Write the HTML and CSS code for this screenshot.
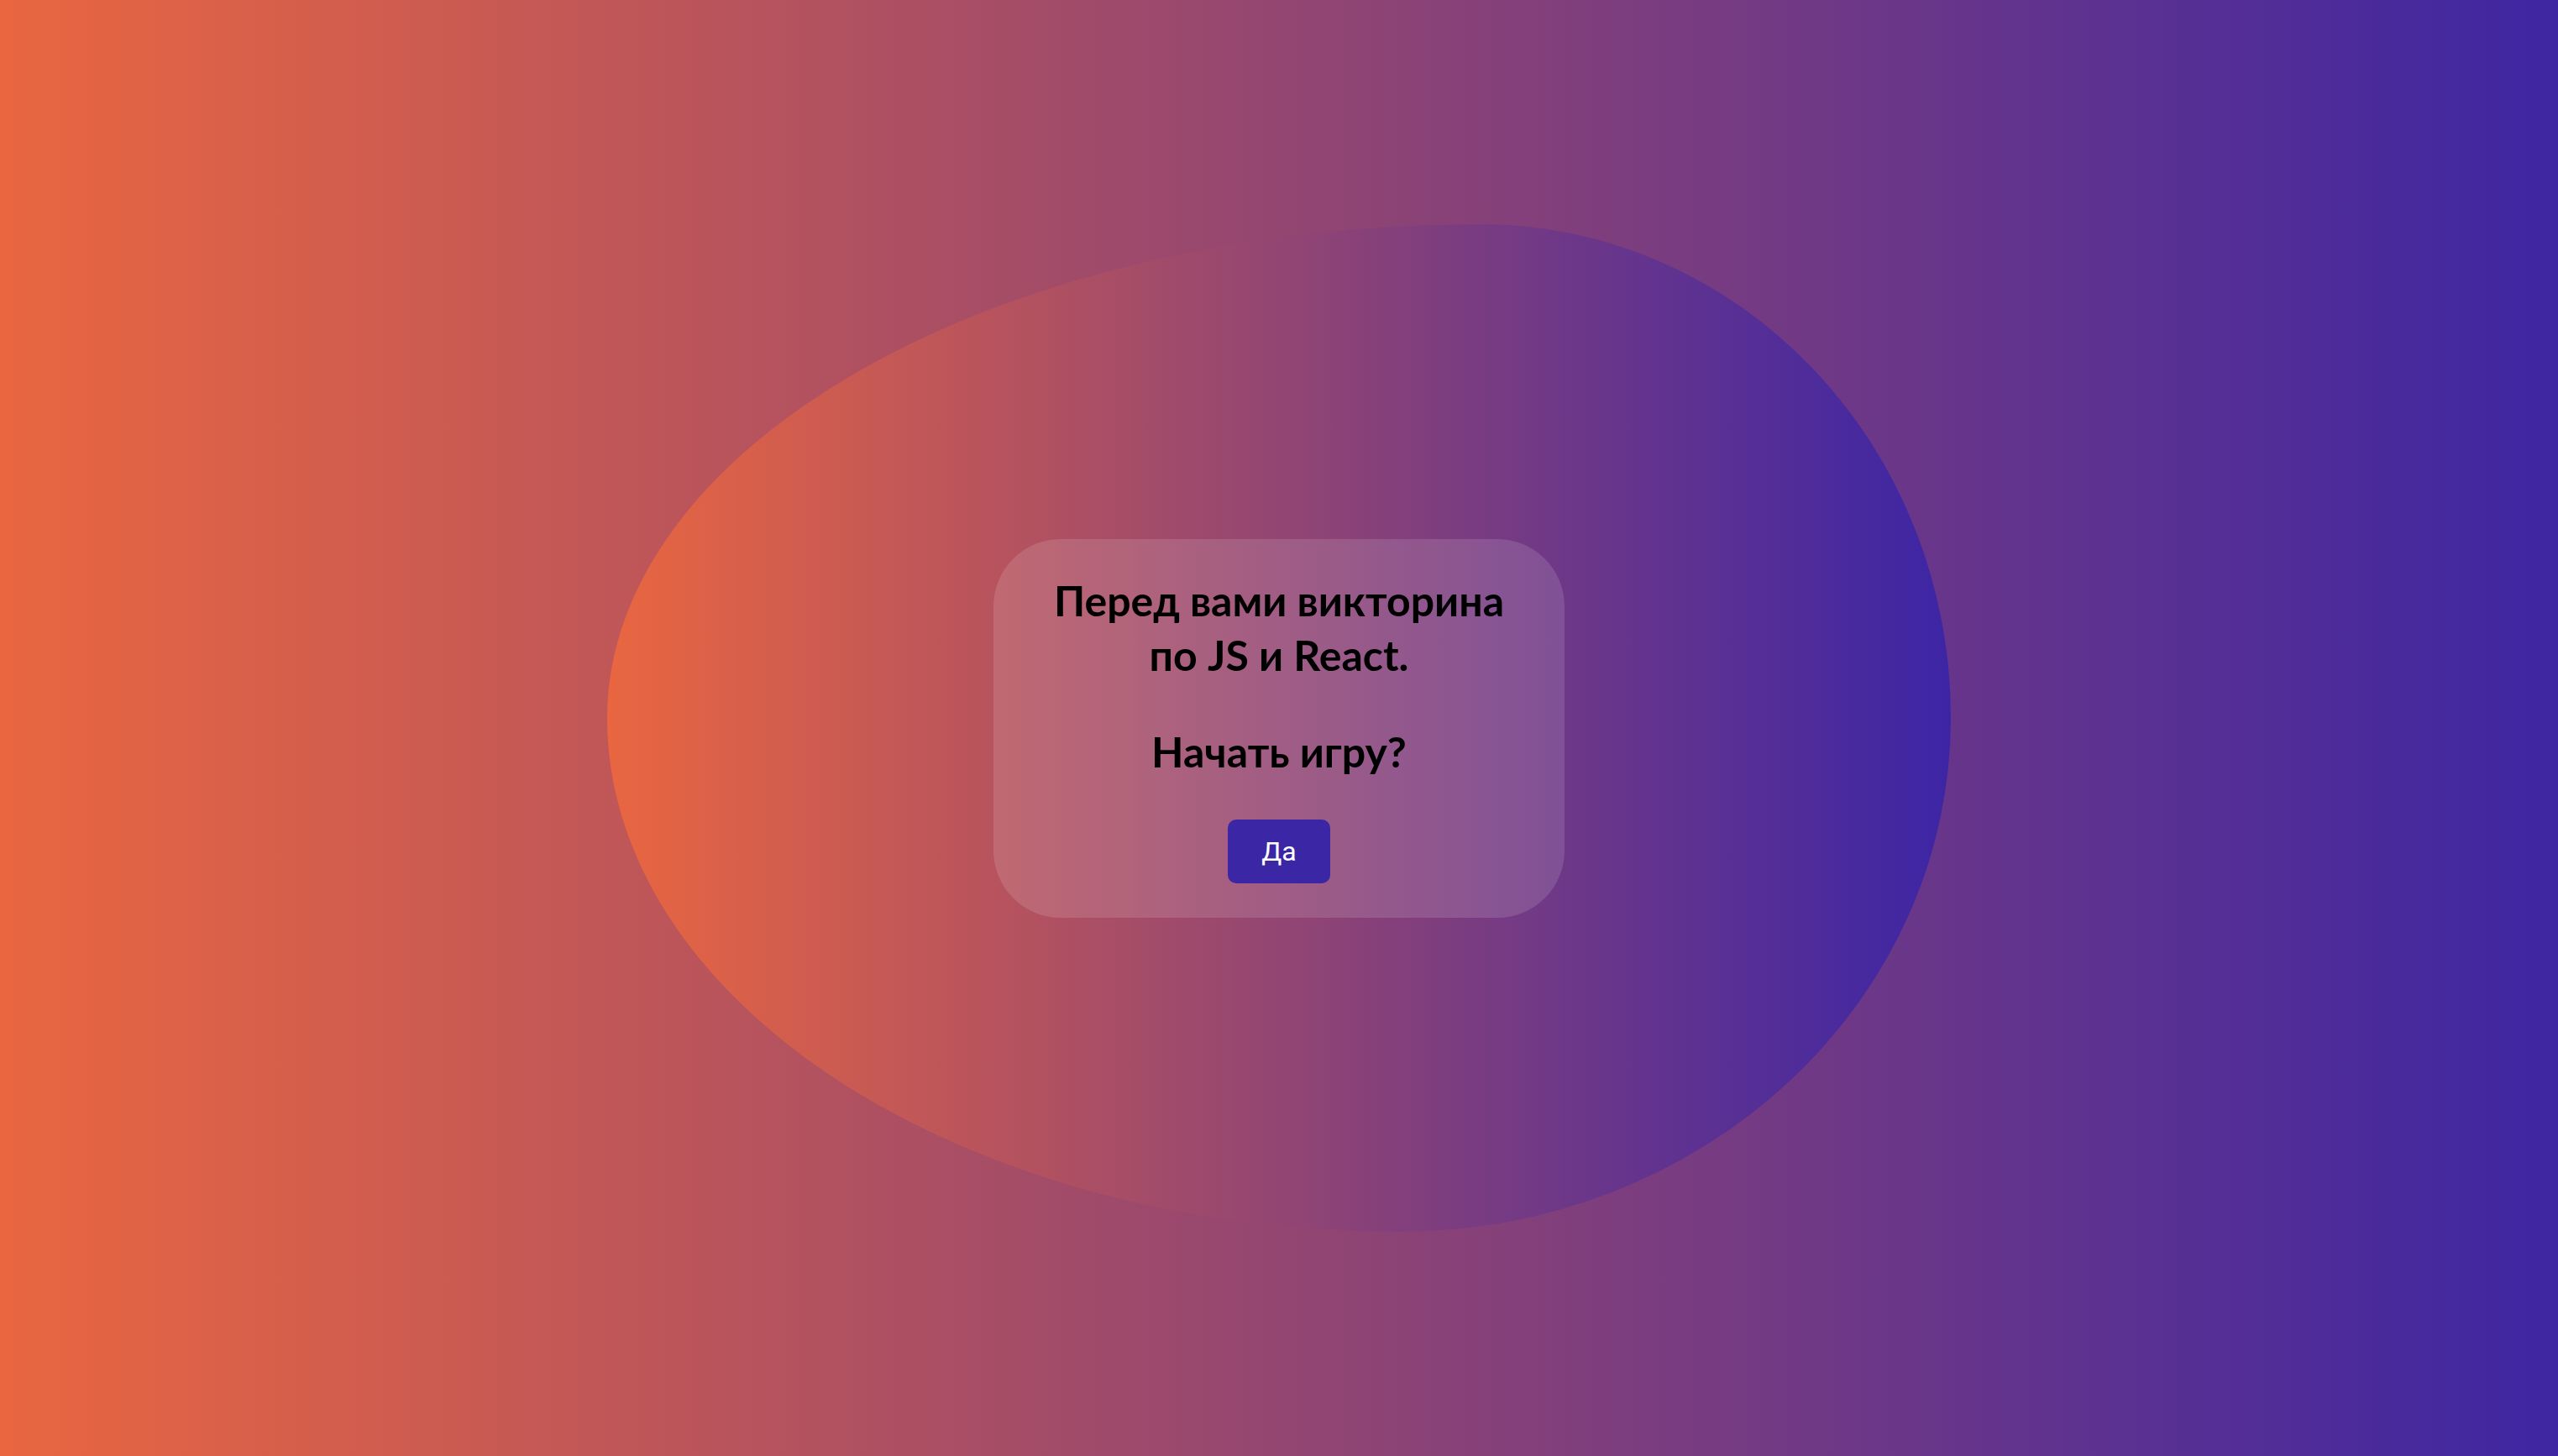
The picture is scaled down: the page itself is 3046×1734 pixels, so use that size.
FILE: index.html
```html
<!DOCTYPE html>
<html lang="ru">
<head>
<meta charset="utf-8">
<title>Викторина</title>
<link rel="stylesheet" href="styles.css">
</head>
<body>
<main class="stage">
  <div class="blob"></div>
  <section class="card">
    <h2 class="title">Перед вами викторина<br>по JS и React.</h2>
    <h2 class="question">Начать игру?</h2>
    <button class="btn" type="button">Да</button>
  </section>
</main>
</body>
</html>
```
FILE: styles.css
```css
html, body {
  margin: 0;
  padding: 0;
  height: 100%;
}

body {
  background: linear-gradient(to right, rgb(233, 102, 64), rgb(62, 38, 162));
  font-family: Lato, "Noto Sans", sans-serif;
  overflow: hidden;
}

.stage {
  display: grid;
  place-items: center;
  height: 100vh;
}

.blob {
  grid-area: 1 / 1;
  width: 1600px;
  height: 1200px;
  border-radius: 65% 35% 41% 59% / 49% 49% 51% 51%;
  background: linear-gradient(to right, rgb(233, 102, 64), rgb(60, 37, 165));
}

.card {
  grid-area: 1 / 1;
  width: 680px;
  box-sizing: border-box;
  padding: 41px 30px 41px;
  border-radius: 80px;
  background: rgba(255, 255, 255, 0.13);
  display: flex;
  flex-direction: column;
  align-items: center;
  text-align: center;
}

.title,
.question {
  margin: 0;
  font-size: 50px;
  line-height: 65px;
  font-weight: 700;
  color: #000;
}

.question {
  margin-top: 50px;
}

.btn {
  margin-top: 48px;
  border: none;
  border-radius: 10px;
  padding: 18px 40px;
  background: rgb(59, 38, 166);
  color: #fff;
  font-family: Roboto, "Liberation Sans", sans-serif;
  font-size: 32px;
  line-height: 40px;
  cursor: pointer;
}
```
